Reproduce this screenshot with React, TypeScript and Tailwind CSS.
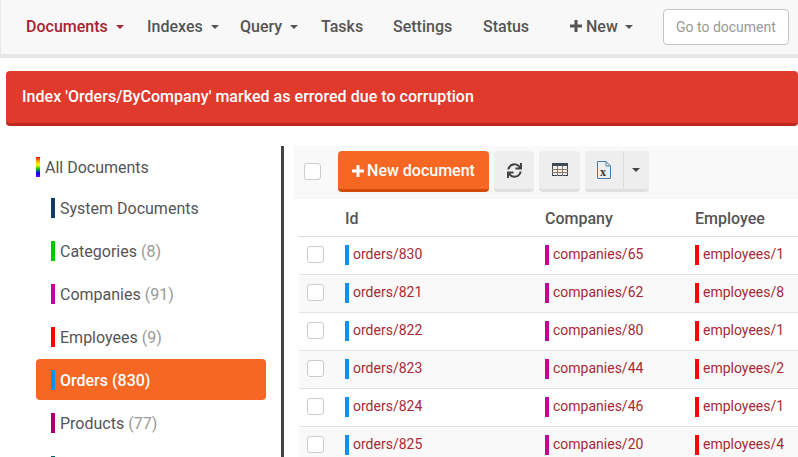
import { FaSync } from "react-icons/fa";

const navItems = [
  { label: "Indexes", caret: true, width: "w-[93px]" },
  { label: "Query", caret: true, width: "w-[81px]" },
  { label: "Tasks", caret: false, width: "w-[72px]" },
  { label: "Settings", caret: false, width: "w-[90px]" },
  { label: "Status", caret: false, width: "w-[87px]" },
];

const collections = [
  { name: "System Documents", count: "", bar: "bg-[#103a65]" },
  { name: "Categories", count: "(8)", bar: "bg-[#00c800]" },
  { name: "Companies", count: "(91)", bar: "bg-[#c8009a]" },
  { name: "Employees", count: "(9)", bar: "bg-[#ff0000]" },
  { name: "Orders", count: "(830)", bar: "bg-[#0095f0]", active: true },
  { name: "Products", count: "(77)", bar: "bg-[#a80070]" },
  { name: "", count: "", bar: "bg-[#006060]" },
];

const rows = [
  { id: "orders/830", company: "companies/65", employee: "employees/1" },
  { id: "orders/821", company: "companies/62", employee: "employees/8" },
  { id: "orders/822", company: "companies/80", employee: "employees/1" },
  { id: "orders/823", company: "companies/44", employee: "employees/2" },
  { id: "orders/824", company: "companies/46", employee: "employees/1" },
  { id: "orders/825", company: "companies/20", employee: "employees/4" },
];

function Caret({ className = "" }: { className?: string }) {
  return <span className={`inline-block h-0 w-0 border-x-[4px] border-t-[4px] border-x-transparent ${className}`} />;
}

function Plus({ className = "" }: { className?: string }) {
  return (
    <svg width="12" height="12" viewBox="0 0 12 12" fill="currentColor" className={className}>
      <path d="M4.5 0H7.5V4.5H12V7.5H7.5V12H4.5V7.5H0V4.5H4.5Z" />
    </svg>
  );
}

function Cell({ text, bar, width }: { text: string; bar: string; width: string }) {
  return (
    <div className={`flex shrink-0 items-center ${width}`}>
      <span className={`mr-1 h-5 w-1 shrink-0 ${bar}`} />
      <span className="mb-[2px] text-sm text-[#a52a35]">{text}</span>
    </div>
  );
}

function GreyButton({ children, width }: { children: React.ReactNode; width: string }) {
  return (
    <button className={`flex h-[41px] items-center justify-center rounded border-b-[3px] border-[#e0e0e0] bg-[#eeeeee] text-[#444] ${width}`}>
      {children}
    </button>
  );
}

export default function App() {
  return (
    <div className="h-[457px] w-[798px] overflow-hidden bg-white font-['Roboto',sans-serif] text-[#555]">
      {/* Navbar */}
      <nav className="flex h-[58px] items-center border-b-[4px] border-l border-[#e7e7e7] bg-[#f8f8f8] pl-[25px] text-base font-medium">
        <div className="flex w-[121px] items-center text-[#a8232f]">
          Documents
          <Caret className="ml-[8px] border-t-[#a8232f]" />
        </div>
        {navItems.map((item) => (
          <div key={item.label} className={`flex items-center ${item.width}`}>
            {item.label}
            {item.caret && <Caret className="ml-[8px] border-t-[#555]" />}
          </div>
        ))}
        <div className="flex w-[93px] items-center">
          <Plus className="mr-[4px] mb-[2px]" />
          New
          <Caret className="ml-[7px] border-t-[#555]" />
        </div>
        <div className="flex h-[36px] w-[126px] items-center rounded border border-[#c4c4c4] bg-white pl-3 text-sm font-normal text-[#999]">
          Go to document
        </div>
      </nav>

      {/* Alert */}
      <div className="mt-[13px] ml-[6px] flex h-[55px] items-center rounded border-b-[3px] border-[#bd2a1d] bg-[#df3a2c] pl-4 text-base font-medium tracking-[0.035px] text-white">
        Index 'Orders/ByCompany' marked as errored due to corruption
      </div>

      <div className="mt-5 flex">
        {/* Sidebar */}
        <aside className="w-[281px] shrink-0 pl-9">
          <div className="flex h-[41px] items-center text-base">
            <span className="mr-[5px] h-5 w-1 bg-[linear-gradient(to_bottom,#ff0000,#ffa500,#ffff00,#00c800,#0000ff,#8000ff)]" />
            <span className="mt-[2px]">All Documents</span>
          </div>
          <ul className="w-[230px]">
            {collections.map((c) => (
              <li
                key={c.bar}
                className={`mb-[2px] flex h-[41px] items-center rounded pl-[15px] text-base ${c.active ? "bg-[#f66723] font-medium text-white" : ""}`}
              >
                <span className={`mr-[5px] h-5 w-1 ${c.bar}`} />
                <span className="mt-[2px]">
                  {c.name}
                  {c.count && <span className={`ml-1 ${c.active ? "" : "text-[#999]"}`}>{c.count}</span>}
                </span>
              </li>
            ))}
          </ul>
        </aside>

        {/* Main */}
        <main className="min-w-0 flex-1 border-l-[3px] border-[#444] pl-[10px]">
          <div className="flex h-[53px] items-center bg-[#f9f9f9] pb-[2px] pl-[10px]">
            <span className="mr-[17px] h-[17px] w-[17px] rounded-[3px] border border-[#ccc] bg-white" />
            <button className="flex h-[41px] w-[151px] items-center justify-center rounded border-b-[3px] border-[#d24a0c] bg-[#f66723] pt-px text-base font-medium text-white">
              <Plus className="mr-[3px]" />
              New document
            </button>
            <div className="ml-[5px] flex gap-[5px]">
              <GreyButton width="w-10">
                <FaSync className="text-[15px]" />
              </GreyButton>
              <GreyButton width="w-[41px]">
                <svg width="16" height="14" viewBox="0 0 16 14">
                  <rect x="0.5" y="0.5" width="15" height="12" fill="none" stroke="#3f4a55" />
                  <rect x="0" y="0" width="16" height="3" fill="#3f4a55" />
                  <path d="M0 6.5H16M0 9.5H16M5.5 3V13M10.5 3V13" stroke="#8a7a66" />
                </svg>
              </GreyButton>
              <div className="flex">
                <GreyButton width="w-[38px] rounded-r-none">
                  <svg width="14" height="18" viewBox="0 0 14 18">
                    <path d="M0.5 0.5H9L13.5 5V17.5H0.5Z M9 0.5V5H13.5" fill="none" stroke="#4a7ca8" />
                    <text x="3" y="15" fontSize="12" fontFamily="'Liberation Serif', serif" fontWeight="700" fill="#333">
                      x
                    </text>
                  </svg>
                </GreyButton>
                <GreyButton width="w-[26px] rounded-l-none border-l-0 shadow-[inset_1px_0_0_#dcdcdc]">
                  <Caret className="border-t-[#444]" />
                </GreyButton>
              </div>
            </div>
          </div>

          {/* Table */}
          <div className="ml-[5px]">
            <div className="flex h-[38px] items-center border-b border-[#dedede] pt-[3px] pl-[46px] text-base font-medium">
              <div className="w-[200px] shrink-0">Id</div>
              <div className="w-[150px] shrink-0">Company</div>
              <div className="shrink-0">Employee</div>
            </div>
            {rows.map((row, i) => (
              <div
                key={row.id}
                className={`flex h-[38px] items-center border-b border-[#e2e2e2] pb-px pl-[8px] ${i % 2 === 1 ? "bg-[#f9f9f9]" : "bg-white"}`}
              >
                <span className="mr-[21px] mb-px h-[17px] w-[17px] shrink-0 rounded-[3px] border border-[#ccc] bg-white" />
                <Cell text={row.id} bar="bg-[#0095f0]" width="w-[200px]" />
                <Cell text={row.company} bar="bg-[#c8009a]" width="w-[150px]" />
                <Cell text={row.employee} bar="bg-[#ff0000]" width="w-[100px]" />
              </div>
            ))}
          </div>
        </main>
      </div>
    </div>
  );
}
